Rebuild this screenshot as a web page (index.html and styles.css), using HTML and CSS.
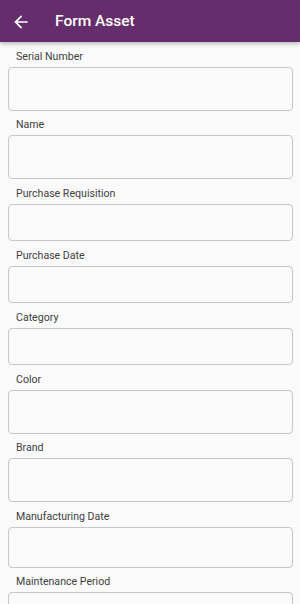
FILE: index.html
```html
<!DOCTYPE html>
<html lang="en">
<head>
    <meta charset="UTF-8">
    <meta name="viewport" content="width=device-width, initial-scale=1.0">
    <title>Form Asset</title>
    <link rel="stylesheet" href="styles.css">
</head>
<body>
    <!-- app bar -->
    <header class="appbar">
        <svg class="back-icon" viewBox="0 0 24 24" width="20" height="20">
            <path d="M20 11H7.83l5.59-5.59L12 4l-8 8 8 8 1.41-1.41L7.83 13H20v-2z" fill="#fff"/>
        </svg>
        <h1 class="appbar-title">Form Asset</h1>
    </header>

    <!-- form fields -->
    <main class="form">
        <div class="field">
            <label class="field-label">Serial Number</label>
            <div class="field-box tall"></div>
        </div>
        <div class="field">
            <label class="field-label">Name</label>
            <div class="field-box tall"></div>
        </div>
        <div class="field">
            <label class="field-label">Purchase Requisition</label>
            <div class="field-box short"></div>
        </div>
        <div class="field">
            <label class="field-label">Purchase Date</label>
            <div class="field-box short"></div>
        </div>
        <div class="field">
            <label class="field-label">Category</label>
            <div class="field-box short"></div>
        </div>
        <div class="field">
            <label class="field-label">Color</label>
            <div class="field-box tall"></div>
        </div>
        <div class="field">
            <label class="field-label">Brand</label>
            <div class="field-box tall"></div>
        </div>
        <div class="field">
            <label class="field-label">Manufacturing Date</label>
            <div class="field-box medium"></div>
        </div>
        <div class="field">
            <label class="field-label">Maintenance Period</label>
            <div class="field-box tall"></div>
        </div>
    </main>
</body>
</html>
```

FILE: styles.css
```css
body {
    font-family: Roboto, "Liberation Sans", sans-serif;
    background-color: #fafafa;
    margin: 0;
    padding: 0;
    overflow: hidden;
    height: 100vh;
}

/* app bar */
.appbar {
    height: 42px;
    background: #652d6b;
    display: flex;
    align-items: center;
    padding-left: 11px;
    box-shadow: 0 2px 4px rgba(0, 0, 0, 0.25);
    position: relative;
    z-index: 1;
}

.back-icon {
    display: block;
    margin-top: 1px;
}

.appbar-title {
    color: #fff;
    font-size: 15.5px;
    font-weight: 500;
    margin: 0 0 0 24px;
}

/* form */
.form {
    padding: 7.5px 7px 0 8px;
}

.field {
    margin-bottom: 7.5px;
}

.field-label {
    display: block;
    font-size: 10.6px;
    line-height: 14px;
    color: #404040;
    padding-left: 8px;
    margin-bottom: 3px;
}

.field-box {
    box-sizing: border-box;
    border: 1px solid #c6c6c6;
    border-radius: 4px;
    background: #fafafa;
}

.field-box.tall {
    height: 44px;
}

.field-box.medium {
    height: 41px;
}

.field-box.short {
    height: 37.5px;
}
```
